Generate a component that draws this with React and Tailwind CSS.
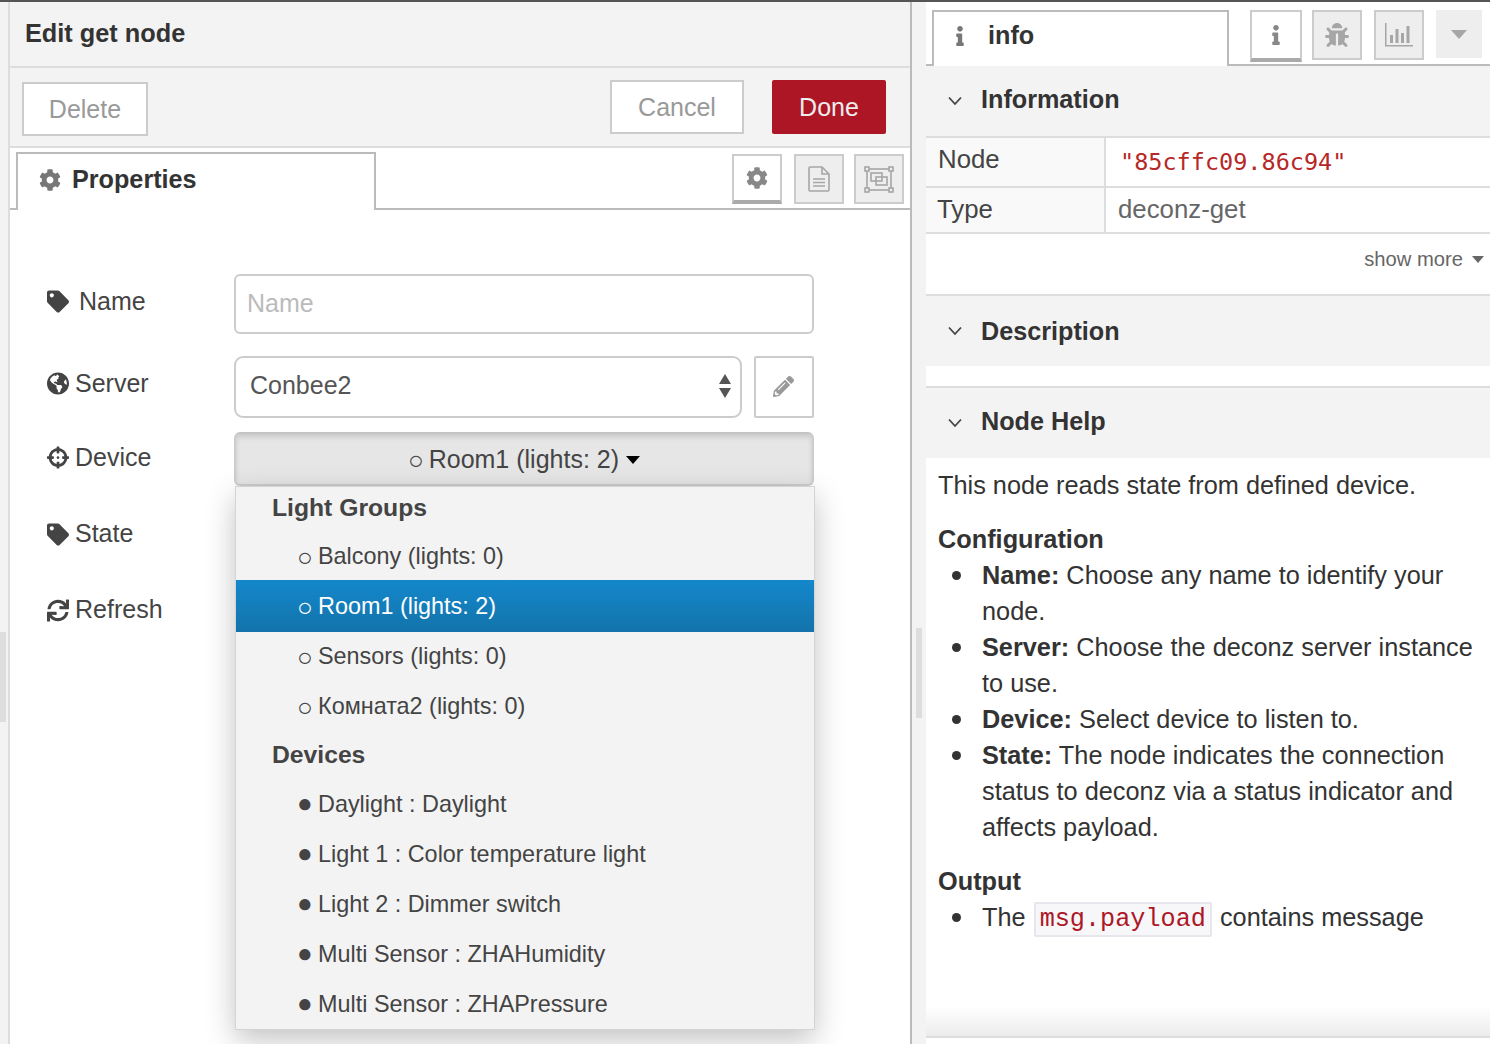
import {
  FaCog,
  FaTag,
  FaGlobeAmericas,
  FaCrosshairs,
  FaSync,
  FaInfo,
  FaBug,
  FaPencilAlt,
} from "react-icons/fa";

const groups = ["Balcony (lights: 0)", "Room1 (lights: 2)", "Sensors (lights: 0)", "Комната2 (lights: 0)"];
const devices = [
  "Daylight : Daylight",
  "Light 1 : Color temperature light",
  "Light 2 : Dimmer switch",
  "Multi Sensor : ZHAHumidity",
  "Multi Sensor : ZHAPressure",
];

function ExpandIcon() {
  return (
    <svg width="30" height="27" viewBox="0 0 30 27" fill="none" stroke="#a6a6a6" strokeWidth="1.6">
      <rect x="3" y="3" width="24" height="21" />
      <rect x="1" y="1" width="4" height="4" fill="#eee" />
      <rect x="25" y="1" width="4" height="4" fill="#eee" />
      <rect x="1" y="22" width="4" height="4" fill="#eee" />
      <rect x="25" y="22" width="4" height="4" fill="#eee" />
      <rect x="7" y="7" width="11" height="8" />
      <rect x="12" y="11" width="11" height="8" />
    </svg>
  );
}

function DocIcon() {
  return (
    <svg width="22" height="26" viewBox="0 0 22 26" fill="none" stroke="#a6a6a6" strokeWidth="1.6">
      <path d="M1 2 Q1 1 2 1 H14 L21 8 V24 Q21 25 20 25 H2 Q1 25 1 24 Z" />
      <path d="M14 1 V8 H21" />
      <path d="M5 13 H17 M5 16.5 H17 M5 20 H17" />
    </svg>
  );
}

function ChartIcon() {
  return (
    <svg width="30" height="24" viewBox="0 0 30 24" fill="#a6a6a6">
      <rect x="1" y="0" width="1.5" height="23" />
      <rect x="1" y="22" width="28" height="1.5" />
      <rect x="6" y="12" width="3" height="8" />
      <rect x="11.5" y="6" width="3" height="14" />
      <rect x="17" y="10" width="3" height="10" />
      <rect x="22.5" y="3" width="3" height="17" />
    </svg>
  );
}

function Chevron() {
  return (
    <svg width="16" height="10" viewBox="0 0 16 10" fill="none" stroke="#444" strokeWidth="1.8">
      <path d="M2 1.5 L8 8 L14 1.5" />
    </svg>
  );
}

function SectionHeader({ title, className, textClass }) {
  return (
    <div className={`flex h-[70px] items-center bg-[#f3f3f3] pl-[21px] ${className || ""}`}>
      <Chevron />
      <span className={`ml-[18px] text-[25.2px] font-bold text-[#333] ${textClass || ""}`}>{title}</span>
    </div>
  );
}

function FormLabel({ icon, text, className, gap }) {
  return (
    <div className={`flex w-[187px] shrink-0 items-center text-[25px] text-[#444] ${className || ""}`}>
      <span className="flex w-[22px] justify-center text-[23px] text-[#444]">{icon}</span>
      <span className={gap || "ml-[6px]"}>{text}</span>
    </div>
  );
}

function MenuItem({ text, glyph, active, glyphClass }) {
  return (
    <div
      className={
        active
          ? "relative -my-px flex h-[52px] shrink-0 items-center bg-gradient-to-b from-[#1488cc] to-[#1373aa] pl-[61px] pt-[1px] text-[#fff]"
          : "flex h-[50px] shrink-0 items-center pl-[61px] pt-[1px] text-[#444]"
      }
    >
      <span className={`w-[21px] text-[26px] leading-none ${glyphClass || ""}`}>{glyph}</span>
      <span>{text}</span>
    </div>
  );
}

function Li({ children }) {
  return (
    <li className="flex">
      <span className="flex h-[36px] w-[44px] shrink-0 items-center pl-[14px]">
        <span className="h-[9px] w-[9px] rounded-full bg-[#333]" />
      </span>
      <div>{children}</div>
    </li>
  );
}

export default function App() {
  return (
    <div className="relative flex h-[1044px] w-[1490px] overflow-hidden bg-white font-['Liberation_Sans',Arial,sans-serif]">
      <div className="absolute left-0 right-0 top-0 z-10 h-[2px] bg-[#555]" />

      {/* left gutter */}
      <div className="relative w-[10px] shrink-0 border-r-2 border-[#ddd] bg-[#f3f3f3]">
        <div className="absolute left-0 top-[632px] h-[90px] w-[6px] bg-[#ddd]" />
      </div>

      {/* edit tray */}
      <div className="relative flex w-[902px] shrink-0 flex-col border-r-2 border-[#bbb] pt-[2px]">
        <div className="flex h-[66px] items-center border-b-2 border-[#ddd] bg-[#f3f3f3] pl-[15px] text-[25.3px] font-bold text-[#333]">
          Edit get node
        </div>
        <div className="flex h-[80px] items-center border-b-2 border-[#ddd] bg-[#f3f3f3] pl-[12px] pr-[24px]">
          <button className="mt-[3px] h-[54px] w-[126px] border-2 border-[#ccc] bg-white pt-[2px] text-[25px] text-[#999]">Delete</button>
          <button className="ml-auto h-[54px] w-[134px] border-2 border-[#ccc] bg-white pt-[2px] text-[25px] text-[#999]">Cancel</button>
          <button className="ml-[28px] h-[54px] w-[114px] rounded-[2px] bg-[#ad1625] pt-[2px] text-[25px] text-[#eee]">Done</button>
        </div>

        {/* tabs */}
        <div className="flex h-[62px] items-end border-b-2 border-[#bbb] pr-[6px]">
          <div className="ml-[6px] -mb-[2px] flex h-[58px] w-[360px] items-center border-2 border-b-0 border-[#bbb] bg-white pb-[4px] pl-[21px]">
            <FaCog className="text-[22px] text-[#777]" />
            <span className="ml-[11px] text-[25.2px] font-bold text-[#333]">Properties</span>
          </div>
          <div className="mb-[4px] ml-auto flex gap-[12px]">
            <div className="flex h-[50px] w-[50px] items-center justify-center border-2 border-b-[4px] border-[#ccc] border-b-[#aaa] bg-white text-[22px] text-[#888]">
              <FaCog />
            </div>
            <div className="flex h-[50px] w-[50px] items-center justify-center border-2 border-[#ccc] bg-[#eee]">
              <DocIcon />
            </div>
            <div className="-ml-[2px] flex h-[50px] w-[50px] items-center justify-center border-2 border-[#ccc] bg-[#eee]">
              <ExpandIcon />
            </div>
          </div>
        </div>

        {/* form */}
        <div className="flex flex-col pl-[37px] pt-[64px]">
          <div className="flex h-[60px] items-start">
            <FormLabel icon={<FaTag />} text="Name" className="pt-[9px]" gap="ml-[10px]" />
            <div className="flex h-[60px] w-[580px] items-center rounded-[6px] border-2 border-[#ccc] pl-[11px] text-[25px] text-[#bbb]">Name</div>
          </div>
          <div className="mt-[22px] flex h-[62px] items-start">
            <FormLabel icon={<FaGlobeAmericas />} text="Server" className="pt-[9px]" />
            <div className="flex h-[62px] w-[508px] items-center justify-between rounded-[9px] border-2 border-[#ccc] pb-[2px] pl-[14px] pr-[8px] text-[25px] text-[#555]">
              <span>Conbee2</span>
              <svg width="14" height="26" viewBox="0 0 14 26" fill="#555">
                <path d="M7 1 L13 11 L1 11 Z" />
                <path d="M7 25 L13 15 L1 15 Z" />
              </svg>
            </div>
            <div className="ml-[12px] flex h-[62px] w-[60px] items-center justify-center rounded-[2px] border-2 border-[#ccc] pb-[2px] pr-[2px] text-[21px] text-[#999]">
              <FaPencilAlt />
            </div>
          </div>
          <div className="mt-[14px] flex h-[54px] items-start">
            <FormLabel icon={<FaCrosshairs />} text="Device" className="pt-[7px]" />
            <div className="flex h-[54px] w-[580px] items-center justify-center rounded-[6px] border-2 border-[#ccc] border-t-[#c4c4c4] bg-[#e6e6e6] pt-[1px] text-[25px] text-[#444] shadow-[inset_0_3px_5px_rgba(0,0,0,0.125)]">
              <span className="mr-[5px] text-[26px] leading-none">○</span>
              <span>Room1 (lights: 2)</span>
              <svg className="ml-[7px]" width="14" height="8" viewBox="0 0 14 8" fill="#000">
                <path d="M0 0 H14 L7 8 Z" />
              </svg>
            </div>
          </div>
          <FormLabel icon={<FaTag />} text="State" className="mt-[21px] h-[54px]" />
          <FormLabel icon={<FaSync />} text="Refresh" className="mt-[22px] h-[54px]" />
        </div>

        {/* dropdown menu */}
        <div className="absolute left-[225px] top-[486px] z-20 flex w-[580px] flex-col border border-[#d4d4d4] bg-[#f3f3f3] text-[23.4px] shadow-[0_10px_28px_rgba(0,0,0,0.24)]">
          <div className="flex h-[44px] shrink-0 items-center pb-[2px] pl-[36px] text-[24.7px] font-bold text-[#444]">Light Groups</div>
          {groups.map((g) => (
            <MenuItem key={g} text={g} glyph="○" active={g.startsWith("Room1")} />
          ))}
          <div className="flex h-[48px] shrink-0 items-center pl-[36px] text-[24.7px] font-bold text-[#444]">Devices</div>
          {devices.map((d) => (
            <MenuItem key={d} text={d} glyph="●" glyphClass="pb-[4px]" />
          ))}
        </div>
      </div>

      {/* right gutter */}
      <div className="relative w-[14px] shrink-0 bg-[#f3f3f3]">
        <div className="absolute left-[4px] top-[628px] h-[90px] w-[6px] bg-[#ddd]" />
      </div>

      {/* sidebar */}
      <div className="relative flex min-w-0 flex-1 flex-col pt-[2px]">
        <div className="flex h-[64px] items-end border-b-2 border-[#bbb] pr-[8px]">
          <div className="ml-[6px] -mb-[2px] flex h-[56px] w-[298px] items-center border-2 border-b-0 border-[#bbb] bg-white pb-[6px] pl-[16px]">
            <FaInfo className="text-[20px] text-[#777]" />
            <span className="ml-[18px] text-[25.2px] font-bold text-[#333]">info</span>
          </div>
          <div className="mb-[2px] ml-[21px] flex gap-[10px]">
            <div className="flex h-[52px] w-[52px] items-center justify-center border-2 border-b-[4px] border-[#ccc] border-b-[#aaa] bg-white text-[20px] text-[#888]">
              <FaInfo />
            </div>
            <div className="flex h-[50px] w-[50px] items-center justify-center border-2 border-[#ccc] bg-[#eee] text-[24px] text-[#a6a6a6]">
              <FaBug />
            </div>
            <div className="ml-[2px] flex h-[50px] w-[50px] items-center justify-center border-2 border-[#ccc] bg-[#eee]">
              <ChartIcon />
            </div>
            <div className="ml-[2px] flex h-[48px] w-[46px] items-center justify-center bg-[#eee]">
              <svg width="16" height="9" viewBox="0 0 16 9" fill="#a6a6a6">
                <path d="M0 0 H16 L8 9 Z" />
              </svg>
            </div>
          </div>
        </div>

        <SectionHeader title="Information" textClass="pb-[2px]" />
        <div className="flex h-[50px] border-t-2 border-[#ddd] text-[25.8px]">
          <div className="flex w-[180px] items-center border-r-2 border-[#ddd] bg-[#f9f9f9] pb-[6px] pl-[12px] text-[#444]">Node</div>
          <div className="flex items-center pl-[14px] pt-[2px] font-['DejaVu_Sans_Mono',monospace] text-[23.5px] text-[#b72828]">"85cffc09.86c94"</div>
        </div>
        <div className="flex h-[48px] border-y-2 border-[#ddd] text-[25.8px]">
          <div className="flex w-[180px] items-center border-r-2 border-[#ddd] bg-[#f9f9f9] pb-[2px] pl-[11px] text-[#444]">Type</div>
          <div className="flex items-center pb-[2px] pl-[12px] text-[#666]">deconz-get</div>
        </div>
        <div className="flex h-[60px] items-center justify-end pr-[6px] pb-[10px] text-[20.2px] text-[#666]">
          show more
          <svg className="ml-[9px]" width="12" height="7" viewBox="0 0 12 7" fill="#666">
            <path d="M0 0 H12 L6 7 Z" />
          </svg>
        </div>
        <SectionHeader title="Description" className="!h-[72px] border-t-2 border-[#ddd]" textClass="pt-[2px]" />
        <div className="h-[20px]" />
        <SectionHeader title="Node Help" className="!h-[72px] border-t-2 border-[#ddd]" textClass="pb-[2px]" />

        <div className="px-[12px] pt-[9px] text-[25.3px] leading-[36px] text-[#333]">
          <p>This node reads state from defined device.</p>
          <p className="mt-[18px] font-bold">Configuration</p>
          <ul>
            <Li><b>Name:</b> Choose any name to identify your node.</Li>
            <Li><b>Server:</b> Choose the deconz server instance to use.</Li>
            <Li><b>Device:</b> Select device to listen to.</Li>
            <Li><b>State:</b> The node indicates the connection status to deconz via a status indicator and affects payload.</Li>
          </ul>
          <p className="mt-[18px] font-bold">Output</p>
          <ul>
            <Li>
              The{" "}
              <code className="mx-[1px] rounded-[2px] border-2 border-[#e6e6ec] bg-[#f7f7fa] px-[4px] py-[1px] font-['Liberation_Mono',monospace] text-[25.2px] text-[#ad1625]">msg.payload</code>{" "}
              contains message
            </Li>
          </ul>
        </div>

        <div className="absolute bottom-[6px] left-0 right-0 h-[32px] border-b-2 border-[#ddd] bg-gradient-to-b from-transparent to-[#ececec]" />
      </div>
    </div>
  );
}
